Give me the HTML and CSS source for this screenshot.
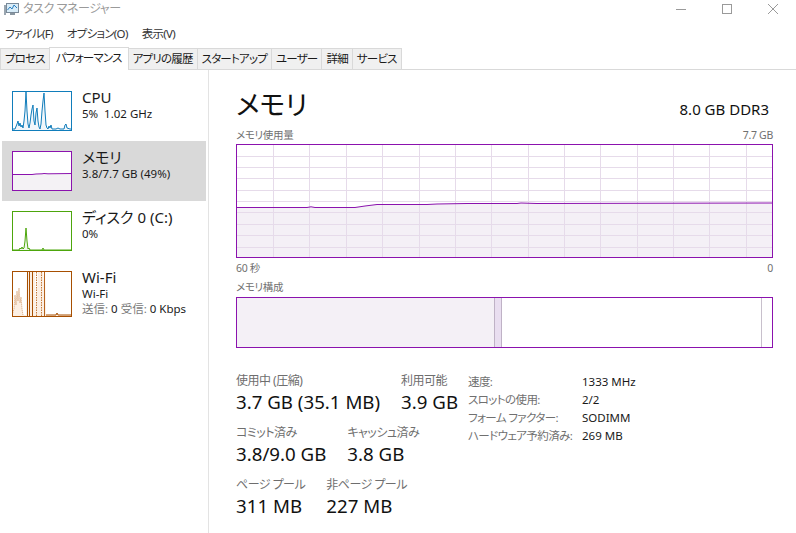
FILE: index.html
```html
<!DOCTYPE html>
<html lang="ja">
<head>
<meta charset="utf-8">
<title>タスク マネージャー</title>
<link rel="stylesheet" href="styles.css">
</head>
<body>
<div class="window">
  <div class="titlebar">
    <svg class="app-icon" width="16" height="14" viewBox="0 0 16 14">
      <rect x="2.5" y="1.5" width="12" height="9" fill="#d8ecf8" stroke="#7a8a99"/>
      <polyline points="3.5,8 6,5 8,7 10,3 13,6" fill="none" stroke="#2a7fc0" stroke-width="1"/>
      <rect x="0" y="3" width="2" height="10" fill="#9aa6b0"/>
      <rect x="6" y="11" width="5" height="2" fill="#8a96a0"/>
    </svg>
    <span class="title-text">タスク マネージャー</span>
    <div class="controls">
      <span class="ctl"><svg width="10" height="10" viewBox="0 0 10 10"><line x1="0" y1="5.5" x2="10" y2="5.5" stroke="#9a9a9a"/></svg></span>
      <span class="ctl"><svg width="10" height="10" viewBox="0 0 10 10"><rect x="0.5" y="0.5" width="9" height="9" fill="none" stroke="#9a9a9a"/></svg></span>
      <span class="ctl"><svg width="10" height="10" viewBox="0 0 10 10"><path d="M0 0 L10 10 M10 0 L0 10" stroke="#9a9a9a"/></svg></span>
    </div>
  </div>

  <div class="menubar">
    <span>ファイル(F)</span>
    <span>オプション(O)</span>
    <span>表示(V)</span>
  </div>

  <div class="tabs">
    <span class="tab">プロセス</span>
    <span class="tab active">パフォーマンス</span>
    <span class="tab">アプリの履歴</span>
    <span class="tab">スタートアップ</span>
    <span class="tab">ユーザー</span>
    <span class="tab">詳細</span>
    <span class="tab">サービス</span>
  </div>

  <div class="body">
    <div class="sidebar">
      <div class="item">
        <svg class="thumb cpu" width="60" height="40" viewBox="0 0 60 40">
          <polygon fill="#f1f6fa" points="0,40 0,38 3,38 5,33 6,30 7,35 8,32 9,36 10,34 11,37 12,30 13,20 14,1 15,20 16,33 17,37 18,32 19,24 20,18 21,14 22,30 23,34 24,22 25,17 26,30 27,36 28,38 29,33 30,20 31,10 32,2 33,20 34,34 35,37 36,38 37,35 38,37 39,34 40,38 44,38 46,37 48,38 52,38 53,34 54,33 55,37 58,38 60,38 60,40"/>
          <polyline fill="none" stroke="#117dbb" stroke-width="1" points="0,38 3,38 5,33 6,30 7,35 8,32 9,36 10,34 11,37 12,30 13,20 14,1 15,20 16,33 17,37 18,32 19,24 20,18 21,14 22,30 23,34 24,22 25,17 26,30 27,36 28,38 29,33 30,20 31,10 32,2 33,20 34,34 35,37 36,38 37,35 38,37 39,34 40,38 44,38 46,37 48,38 52,38 53,34 54,33 55,37 58,38 60,38"/>
          <rect x="0.5" y="0.5" width="59" height="39" fill="none" stroke="#117dbb"/>
        </svg>
        <div class="item-text">
          <div class="item-title">CPU</div>
          <div class="item-sub">5%&nbsp; 1.02 GHz</div>
        </div>
      </div>

      <div class="item selected">
        <svg class="thumb" width="60" height="40" viewBox="0 0 60 40">
          <rect x="0" y="0" width="60" height="40" fill="#ffffff"/>
          <polygon fill="#f4f2f5" points="0,23.5 20,23.5 24,23 30,22.8 32,22.5 36,22.8 60,22.5 60,40 0,40"/>
          <polyline fill="none" stroke="#8b12ae" stroke-width="1" points="0,23.5 20,23.5 24,23 30,22.8 32,22.5 36,22.8 60,22.5"/>
          <rect x="0.5" y="0.5" width="59" height="39" fill="none" stroke="#8b12ae"/>
        </svg>
        <div class="item-text">
          <div class="item-title">メモリ</div>
          <div class="item-sub">3.8/7.7 GB (49%)</div>
        </div>
      </div>

      <div class="item">
        <svg class="thumb" width="60" height="40" viewBox="0 0 60 40">
          <polygon fill="#eff7e9" points="0,39 7,39 8,37 9,38 10,36 11,38 12,37 13,30 14,17 15,30 16,38 17,37 18,39 30,39 31,37 32,39 60,39 60,40 0,40"/>
          <polyline fill="none" stroke="#4da60c" stroke-width="1" points="0,39 7,39 8,37 9,38 10,36 11,38 12,37 13,30 14,17 15,30 16,38 17,37 18,39 30,39 31,37 32,39 60,39"/>
          <rect x="0.5" y="0.5" width="59" height="39" fill="none" stroke="#4da60c"/>
        </svg>
        <div class="item-text">
          <div class="item-title">ディスク 0 (C:)</div>
          <div class="item-sub">0%</div>
        </div>
      </div>

      <div class="item wifi">
        <svg class="thumb" width="60" height="46" viewBox="0 0 60 46">
          <polygon fill="#fcefe3" points="0,46 0,44 2,38 3,24 4,34 5,20 6,30 7,17 8,32 9,26 10,38 11,44 14,44 15,1 23,1 24,44 25,20 26,1 31,1 32,12 33,1 34,44 44,44 45,42 46,44 60,44 60,46"/>
          <polyline fill="none" stroke="#c98a55" stroke-width="0.8" stroke-dasharray="1,1" points="0,44 2,38 3,24 4,34 5,20 6,30 7,17 8,32 9,26 10,38 11,44"/>
          <line x1="15.5" y1="1" x2="15.5" y2="46" stroke="#a74f01" stroke-width="1"/>
          <line x1="17.5" y1="1" x2="17.5" y2="46" stroke="#a74f01" stroke-width="1"/>
          <line x1="20.5" y1="1" x2="20.5" y2="46" stroke="#a74f01" stroke-width="1"/>
          <line x1="24.5" y1="1" x2="24.5" y2="46" stroke="#c47a3a" stroke-width="1" stroke-dasharray="1.5,1"/>
          <line x1="29.5" y1="1" x2="29.5" y2="46" stroke="#c47a3a" stroke-width="1" stroke-dasharray="1.5,1"/>
          <line x1="32.5" y1="1" x2="32.5" y2="46" stroke="#b5621d" stroke-width="1"/>
          <polyline fill="none" stroke="#a74f01" stroke-width="1" points="34,44 44,44 45,42 46,44 60,44"/>
          <rect x="0.5" y="0.5" width="59" height="45" fill="none" stroke="#a74f01"/>
        </svg>
        <div class="item-text">
          <div class="item-title">Wi-Fi</div>
          <div class="item-sub">Wi-Fi</div>
          <div class="item-sub"><span class="muted">送信:</span> 0 <span class="muted">受信:</span> 0 Kbps</div>
        </div>
      </div>
    </div>

    <div class="main">
      <div class="header">
        <h1 class="page-title">メモリ</h1>
        <div class="spec">8.0 GB DDR3</div>
      </div>
      <div class="axis-row">
        <span>メモリ使用量</span>
        <span>7.7 GB</span>
      </div>
      <div class="graph">
        <svg width="535" height="112" viewBox="0 0 535 112">
          <polygon fill="#f4f0f6" points="0,62.5 70,62.5 74,61.8 78,62.5 118,62.5 128,61 140,59.5 190,59.5 200,59 230,58.5 280,58.5 284,58 300,58.5 535,58 535,112 0,112"/>
          <g stroke="#e6dbea" stroke-width="1">
            <line x1="0" y1="11.5" x2="535" y2="11.5"/>
            <line x1="0" y1="22.5" x2="535" y2="22.5"/>
            <line x1="0" y1="33.5" x2="535" y2="33.5"/>
            <line x1="0" y1="45.5" x2="535" y2="45.5"/>
            <line x1="0" y1="56.5" x2="535" y2="56.5"/>
            <line x1="0" y1="67.5" x2="535" y2="67.5"/>
            <line x1="0" y1="79.5" x2="535" y2="79.5"/>
            <line x1="0" y1="90.5" x2="535" y2="90.5"/>
            <line x1="0" y1="102.5" x2="535" y2="102.5"/>
            <line x1="36.5" y1="0" x2="36.5" y2="112"/>
            <line x1="72.5" y1="0" x2="72.5" y2="112"/>
            <line x1="109.5" y1="0" x2="109.5" y2="112"/>
            <line x1="145.5" y1="0" x2="145.5" y2="112"/>
            <line x1="182.5" y1="0" x2="182.5" y2="112"/>
            <line x1="218.5" y1="0" x2="218.5" y2="112"/>
            <line x1="254.5" y1="0" x2="254.5" y2="112"/>
            <line x1="291.5" y1="0" x2="291.5" y2="112"/>
            <line x1="327.5" y1="0" x2="327.5" y2="112"/>
            <line x1="363.5" y1="0" x2="363.5" y2="112"/>
            <line x1="400.5" y1="0" x2="400.5" y2="112"/>
            <line x1="436.5" y1="0" x2="436.5" y2="112"/>
            <line x1="472.5" y1="0" x2="472.5" y2="112"/>
            <line x1="509.5" y1="0" x2="509.5" y2="112"/>
          </g>
          <polyline fill="none" stroke="#8b12ae" stroke-width="1" points="0,62.5 70,62.5 74,61.8 78,62.5 118,62.5 128,61 140,59.5 190,59.5 200,59 230,58.5 280,58.5 284,58 300,58.5 535,58"/>
        </svg>
      </div>
      <div class="axis-row bottom">
        <span>60 秒</span>
        <span>0</span>
      </div>
      <div class="axis-row comp-label">
        <span>メモリ構成</span>
      </div>
      <div class="composition">
        <div class="seg inuse"></div>
        <div class="seg modified"></div>
        <div class="seg standby"></div>
        <div class="seg free"></div>
      </div>

      <div class="stats">
        <div class="stats-left">
          <div class="stat-row">
            <div class="stat">
              <div class="stat-label">使用中 (圧縮)</div>
              <div class="stat-value">3.7 GB (35.1 MB)</div>
            </div>
            <div class="stat">
              <div class="stat-label">利用可能</div>
              <div class="stat-value">3.9 GB</div>
            </div>
          </div>
          <div class="stat-row">
            <div class="stat">
              <div class="stat-label">コミット済み</div>
              <div class="stat-value">3.8/9.0 GB</div>
            </div>
            <div class="stat">
              <div class="stat-label">キャッシュ済み</div>
              <div class="stat-value">3.8 GB</div>
            </div>
          </div>
          <div class="stat-row">
            <div class="stat">
              <div class="stat-label">ページ プール</div>
              <div class="stat-value">311 MB</div>
            </div>
            <div class="stat">
              <div class="stat-label">非ページ プール</div>
              <div class="stat-value">227 MB</div>
            </div>
          </div>
        </div>
        <div class="info">
          <div class="info-row"><span class="info-label">速度:</span><span class="info-value">1333 MHz</span></div>
          <div class="info-row"><span class="info-label">スロットの使用:</span><span class="info-value">2/2</span></div>
          <div class="info-row"><span class="info-label">フォーム ファクター:</span><span class="info-value">SODIMM</span></div>
          <div class="info-row"><span class="info-label">ハードウェア予約済み:</span><span class="info-value">269 MB</span></div>
        </div>
      </div>
    </div>
  </div>
</div>
</body>
</html>
```

FILE: styles.css
```css
* { box-sizing: border-box; }

html, body {
  margin: 0;
  padding: 0;
  background: #ffffff;
}

body {
  font-family: "Noto Sans", "Noto Sans CJK JP", sans-serif;
  font-feature-settings: "palt";
  color: #1a1a1a;
  width: 796px;
  height: 533px;
  overflow: hidden;
}

.window {
  width: 796px;
  height: 533px;
  display: flex;
  flex-direction: column;
}

/* title bar */
.titlebar {
  height: 20px;
  display: flex;
  align-items: center;
  padding-left: 4px;
}
.app-icon { margin-top: -2px; }
.title-text {
  margin-left: 3px;
  font-size: 12px;
  line-height: 16px;
  color: #9a9a9a;
  margin-top: -3px;
  letter-spacing: -0.4px;
}
.controls {
  margin-left: auto;
  display: flex;
  align-self: flex-start;
}
.ctl {
  width: 46px;
  height: 18px;
  display: flex;
  align-items: center;
  justify-content: center;
}

/* menu */
.menubar {
  height: 26px;
  display: flex;
  align-items: center;
  gap: 14px;
  padding-left: 5px;
  font-size: 11.5px;
  letter-spacing: -0.7px;
  color: #333;
  padding-top: 0;
}

/* tabs */
.tabs {
  height: 24px;
  display: flex;
  align-items: flex-end;
  border-bottom: 1px solid #d9d9d9;
  padding-left: 0;
}
.tab {
  height: 21px;
  padding: 0 4px;
  font-size: 11.5px;
  letter-spacing: -0.8px;
  line-height: 19px;
  background: #f0f0f0;
  border: 1px solid #d9d9d9;
  border-bottom: none;
  margin-right: -1px;
  color: #1a1a1a;
  white-space: nowrap;
}
.tab.active {
  height: 23px;
  background: #ffffff;
  position: relative;
  top: 1px;
  z-index: 1;
  line-height: 20px;
  padding: 0 6px;
}

/* body */
.body {
  flex: 1;
  display: flex;
  min-height: 0;
}

.sidebar {
  width: 209px;
  padding: 11px 2px 0 2px;
  border-right: 1px solid #e3e3e3;
  flex: none;
}
.item {
  height: 60px;
  display: flex;
  align-items: flex-start;
  gap: 10px;
  padding: 7px 0 0 10px;
}
.item.wifi { height: 66px; }
.item.selected { background: #d9d9d9; }
.thumb {
  margin-top: 3px;
  flex: none;
  display: block;
}
.item-text { display: flex; flex-direction: column; }
.item-title {
  font-size: 15px;
  line-height: 18px;
  color: #1a1a1a;
}
.item-sub {
  font-size: 11.5px;
  line-height: 15px;
  color: #1a1a1a;
}
.muted { color: #7a7a7a; }

/* main */
.main {
  width: 537px;
  margin-left: 27px;
  display: flex;
  flex-direction: column;
}
.header {
  margin-top: 18px;
  height: 40px;
  display: flex;
  align-items: baseline;
  justify-content: space-between;
}
.page-title {
  margin: 0;
  font-size: 27px;
  line-height: 34px;
  font-weight: 400;
  color: #111;
}
.spec {
  font-size: 15px;
  color: #111;
  margin-right: 4px;
}
.axis-row {
  display: flex;
  justify-content: space-between;
  font-size: 10.5px;
  letter-spacing: -0.3px;
  line-height: 13px;
  color: #707070;
  margin-top: 1px;
}
.axis-row.bottom { margin-top: 4px; }
.axis-row.comp-label { margin-top: 6px; }

.graph {
  margin-top: 2px;
  height: 114px;
  border: 1px solid #8b12ae;
}
.graph svg { display: block; }

.composition {
  margin-top: 3px;
  height: 51px;
  border: 1px solid #8b12ae;
  display: flex;
}
.seg { height: 100%; }
.seg.inuse { width: 257px; background: #f4f0f6; }
.seg.modified {
  width: 8px;
  background: #e9def0;
  border-left: 1px solid #bfb2c6;
  border-right: 1px solid #bfb2c6;
}
.seg.standby {
  width: 260px;
  background: #ffffff;
  border-right: 1px solid #c8c0cc;
}
.seg.free { flex: 1; background: #ffffff; }

/* stats */
.stats {
  margin-top: 25px;
  display: flex;
}
.stats-left {
  width: 232px;
  flex: none;
  display: flex;
  flex-direction: column;
}
.stat-row {
  display: flex;
  gap: 21px;
  margin-bottom: 12px;
  white-space: nowrap;
}
.stat { display: flex; flex-direction: column; gap: 2px; }
.stat-label {
  font-size: 12px;
  line-height: 16px;
  letter-spacing: -0.5px;
  color: #6e6e6e;
}
.stat-value {
  font-size: 18.7px;
  line-height: 22px;
  color: #111;
}

.info {
  display: flex;
  flex-direction: column;
  margin-top: 0;
}
.info-row {
  display: flex;
  font-size: 11.5px;
  line-height: 18px;
  white-space: nowrap;
}
.info-label {
  width: 114px;
  color: #707070;
  letter-spacing: -0.6px;
}
.info-value { color: #1a1a1a; }
```
